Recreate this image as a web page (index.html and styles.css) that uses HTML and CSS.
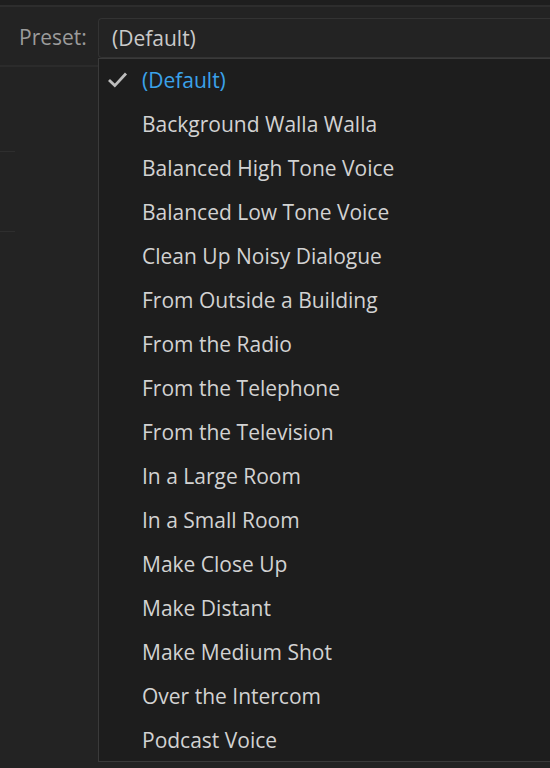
FILE: index.html
```html
<!DOCTYPE html>
<html lang="en">
<head>
    <meta charset="UTF-8">
    <meta name="viewport" content="width=device-width, initial-scale=1.0">
    <title>Preset</title>
    <link rel="stylesheet" href="styles.css">
</head>
<body>

<div class="topbar"></div>
<div class="panel">
    <div class="preset-row">
        <span class="label">Preset:</span>
        <div class="select">
            <span class="select-value">(Default)</span>
            <ul class="menu">
                <li class="item selected">
                    <svg class="check" width="21" height="17" viewBox="0 0 21 17"><path d="M2 9 L7.8 14.6 L19 2.5" fill="none" stroke="#bdbdbd" stroke-width="2.8"/></svg>
                    (Default)
                </li>
                <li class="item">Background Walla Walla</li>
                <li class="item">Balanced High Tone Voice</li>
                <li class="item">Balanced Low Tone Voice</li>
                <li class="item">Clean Up Noisy Dialogue</li>
                <li class="item">From Outside a Building</li>
                <li class="item">From the Radio</li>
                <li class="item">From the Telephone</li>
                <li class="item">From the Television</li>
                <li class="item">In a Large Room</li>
                <li class="item">In a Small Room</li>
                <li class="item">Make Close Up</li>
                <li class="item">Make Distant</li>
                <li class="item">Make Medium Shot</li>
                <li class="item">Over the Intercom</li>
                <li class="item">Podcast Voice</li>
            </ul>
        </div>
    </div>
    <div class="rule short first"></div>
    <div class="rule short second"></div>
</div>

</body>
</html>
```

FILE: styles.css
```css
body {
    margin: 0;
    background-color: #232323;
    font-family: "Open Sans", "Noto Sans", sans-serif;
    height: 768px;
    overflow: hidden;
}
.topbar {
    height: 5px;
    background-color: #1e1e1e;
    border-bottom: 2px solid #2d2d2d;
}
.panel {
    position: relative;
}
.preset-row {
    display: flex;
    align-items: flex-start;
    height: 60px;
    padding-top: 11px;
    box-sizing: border-box;
    border-bottom: 2px solid #2b2b2b;
}
.label {
    width: 79px;
    padding-left: 19px;
    font-size: 21px;
    line-height: 38px;
    color: #9b9b9b;
}
.select {
    position: relative;
    flex: 1;
    height: 38px;
    border: 1px solid #333333;
    border-right: none;
    border-radius: 4px 0 0 4px;
    background-color: #232323;
}
.select-value {
    display: block;
    padding-left: 13px;
    font-size: 21px;
    line-height: 38px;
    color: #cacaca;
}
.menu {
    position: absolute;
    top: 39px;
    left: -1px;
    width: 460px;
    height: 702px;
    overflow: hidden;
    margin: 0;
    padding: 0;
    list-style: none;
    border: 1px solid #3a3a3a;
    border-right: none;
    background-color: #1d1d1d;
}
.item {
    position: relative;
    height: 44px;
    padding-left: 43px;
    font-size: 21px;
    line-height: 42px;
    color: #d2d2d2;
    white-space: nowrap;
}
.selected {
    color: #3ba2ea;
}
.check {
    position: absolute;
    left: 8px;
    top: 12px;
}
.rule {
    width: 15px;
    height: 1px;
    background-color: #2e2e2e;
}
.first {
    margin-top: 84px;
}
.second {
    margin-top: 79px;
}
```
